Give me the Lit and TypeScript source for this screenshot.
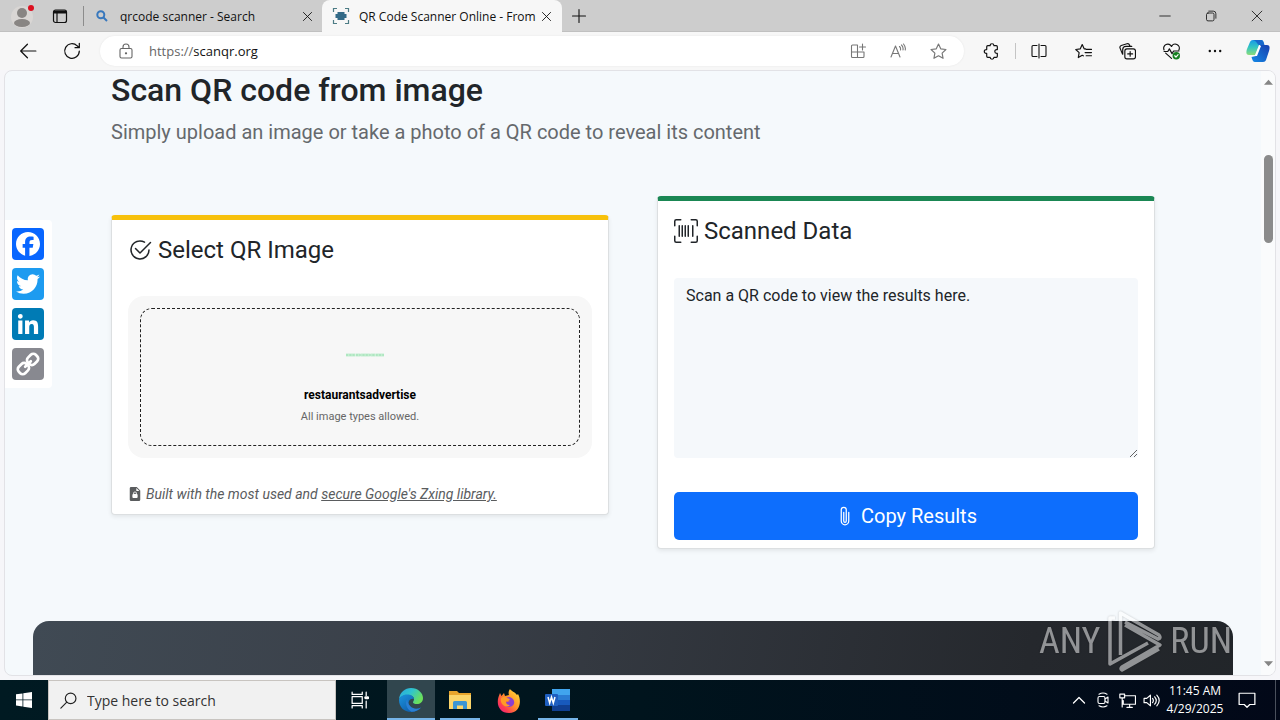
import { LitElement, html, css, svg, TemplateResult } from "lit";
import { customElement } from "lit/decorators.js";

const line = (size: number, body: TemplateResult, box = 16) => html`
  <svg class="line" width=${size} height=${size} viewBox="0 0 ${box} ${box}" aria-hidden="true">${body}</svg>`;
const solid = (size: number, body: TemplateResult, box = 16) => html`
  <svg class="solid" width=${size} height=${size} viewBox="0 0 ${box} ${box}" aria-hidden="true">${body}</svg>`;

const closeIcon = (s: number) => line(s, svg`<path d="M3 3l10 10M13 3L3 13"/>`);

const shared = css`
  * { box-sizing: border-box; }
  button {
    display: inline-flex; align-items: center; justify-content: center;
    border: 0; padding: 0; margin: 0; background: none; color: inherit; font: inherit;
  }
  svg { display: block; flex: none; }
  .line { fill: none; stroke: currentColor; stroke-width: 1.1; stroke-linecap: round; stroke-linejoin: round; }
  .solid { fill: currentColor; }
`;

@customElement("browser-chrome")
export class BrowserChrome extends LitElement {
  static styles = [shared, css`
    :host { display: block; font-family: "Open Sans", "Noto Sans", sans-serif; font-size: 12px; color: #111; }
    .titlebar { display: flex; height: 32px; background: #cdcdcd; align-items: stretch; box-shadow: inset 0 -1px #c0c0c0; }
    .profile { width: 44px; }
    .workspace { width: 32px; }
    .divider { width: 1px; height: 20px; margin: 6px 8px 6px 7px; background: #8c8c8c; }
    .tab { display: flex; align-items: center; }
    .idle { width: 230px; padding: 0 8px 0 4px; gap: 12px; }
    .active { width: 240px; padding: 0 9px 0 10px; gap: 9px; background: #f7f7f7; border-radius: 8px 8px 0 0; }
    .name { flex: 1; min-width: 0; justify-content: flex-start; white-space: nowrap; }
    .new { width: 34px; }
    .window { display: flex; margin-left: auto; }
    .window button { width: 46px; }
    .toolbar { display: flex; height: 38px; background: #f7f7f7; align-items: center; padding: 0 2px 0 6px; }
    .tool { width: 44px; height: 30px; }
    .copilot { width: 41px; height: 30px; }
    .address {
      flex: 1; min-width: 0; height: 30px; margin: 0 5px 0 6px; padding: 0 6px 0 18px; display: flex; align-items: center;
      background: #fff; border-radius: 15px; box-shadow: 0 0 2px #e4e4e4; color: #666; font-size: 13px;
    }
    .address label { margin-left: 15px; }
    .address input { flex: 1; min-width: 0; border: 0; outline: 0; padding: 0; background: none; color: #111; font: inherit; }
    .address button { width: 40px; height: 30px; color: #777; }
    .sep { width: 1px; height: 16px; margin: 0 1px 0 2px; background: #c4c4c4; }
  `];

  render() {
    return html`
      <header class="titlebar">
        <button class="profile" aria-label="Profile">
          <svg width="24" height="26" viewBox="0 0 24 26">
            <circle cx="12" cy="14" r="11" fill="#d9d6d4"/>
            <circle cx="12" cy="10" r="5" fill="#888583"/>
            <ellipse cx="12" cy="20" rx="8" ry="4" fill="#888583"/>
            <circle cx="21" cy="5" r="3" fill="#dc1020"/>
          </svg>
        </button>
        <button class="workspace" aria-label="Tab actions">
          <svg width="16" height="16" viewBox="0 0 16 16" fill="none" stroke="#111" stroke-width="1.2">
            <rect x="1.5" y="2" width="13" height="12.5" rx="2"/><path d="M2 4h12" stroke-width="3"/><path d="M5 4v10"/>
          </svg>
        </button>
        <span class="divider"></span>
        <div class="tab idle">
          <svg width="12" height="12" viewBox="0 0 12 12" fill="none" stroke="#3878bd" stroke-width="2">
            <circle cx="4.800" cy="4.800" r="3.500"/><path d="M7.500 7.500L11 11"/>
          </svg>
          <button class="name">qrcode scanner - Search</button>
          <button aria-label="Close tab">${closeIcon(13)}</button>
        </div>
        <div class="tab active">
          <svg width="18" height="18" viewBox="0 0 18 18">
            <path d="M1.500 5V1.500H5M13 1.500h3.500V5M16.500 13v3.500H13M5 16.500H1.500V13" fill="none" stroke="#4d7c85" stroke-width="1.200"/>
            <path d="M5.500 5h7v2h2v4h-2v2h-7v-2h-2V7h2z" fill="#336a87"/>
          </svg>
          <button class="name">QR Code Scanner Online - From</button>
          <button aria-label="Close tab">${closeIcon(13)}</button>
        </div>
        <button class="new" aria-label="New tab">${line(16, svg`<path d="M8 1.500v13M1.500 8h13"/>`)}</button>
        <div class="window">
          <button aria-label="Minimize">${line(12, svg`<path d="M1 8h14"/>`)}</button>
          <button aria-label="Restore">${line(12, svg`<rect x="2" y="4" width="10" height="10.500" rx="2"/><path d="M5 1.500h6a3.500 3.500 0 0 1 3.500 3.500v6"/>`)}</button>
          <button aria-label="Close">${line(12, svg`<path d="M1.500 1.500l13 13M14.500 1.500l-13 13"/>`)}</button>
        </div>
      </header>
      <nav class="toolbar">
        <button class="tool" aria-label="Back">${line(18, svg`<path d="M15 8H1.500M7.500 2L1.500 8l6 6"/>`)}</button>
        <button class="tool" aria-label="Refresh">${line(18, svg`<path d="M14.500 8A6.500 6.500 0 1 1 12.600 3.400L14.300 5M14.500 1.200V5h-3.800"/>`)}</button>
        <div class="address">
          ${line(16, svg`<rect x="2" y="5.500" width="12" height="9.500" rx="1.500"/><path d="M5 5.500V4a3 3 0 0 1 6 0v1.500"/><circle cx="8" cy="10.300" r=".6" fill="currentColor"/>`)}
          <label for="url">https://</label><input id="url" value="scanqr.org">
          <button aria-label="Install app">${line(16, svg`<path d="M7 2H2.500A1 1 0 0 0 1.500 3v10.500a1 1 0 0 0 1 1H13a1 1 0 0 0 1-1V9H1.500M7.500 2v12.500M12.500 1v6M9.500 4h6"/>`)}</button>
          <button aria-label="Read aloud">${line(16, svg`<path d="M1 14L5.500 3 10 14M2.500 10.500h6M9.500 3.500q1.500 1.500 1 3.500M11.500 2q2 2 1.500 5M13.500 1q2.500 3 1.700 6"/>`)}</button>
          <button aria-label="Add favorite">${line(17, svg`<path d="M8 1l2.100 4.500 4.900.6-3.600 3.400.9 4.900L8 12l-4.300 2.400.9-4.900L1 6.100l4.900-.6z"/>`)}</button>
        </div>
        <button class="tool" aria-label="Extensions">${line(17, svg`<path d="M4.500 2.500h2.200a1.800 1.800 0 0 1 3.600 0h2.200a1 1 0 0 1 1 1v2.700h-.6a1.800 1.800 0 0 0 0 3.600h.6v2.700a1 1 0 0 1-1 1h-2.200a1.800 1.800 0 0 1-3.600 0H4.500a1 1 0 0 1-1-1V9.800H3a1.800 1.800 0 0 1 0-3.600h.5V3.500a1 1 0 0 1 1-1z"/>`)}</button>
        <span class="sep"></span>
        <button class="tool" aria-label="Split screen">${line(16, svg`<path d="M6 2.500H2a1 1 0 0 0-1 1v9a1 1 0 0 0 1 1h4M10 2.500h4a1 1 0 0 1 1 1v9a1 1 0 0 1-1 1h-4M8 1v14"/>`)}</button>
        <button class="tool" aria-label="Favorites">${line(17, svg`<path d="M10 5.500H8.600L6.800 1.500 5 5.500l-4.300.6 3.200 3-.8 4.600 3.700-2.200 1 .6M10.500 6h5M9.500 9h6M10.500 12h5"/>`)}</button>
        <button class="tool" aria-label="Collections">${line(17, svg`<rect x="5.500" y="5.500" width="10" height="9.500" rx="2"/><path d="M10.500 8v4.500M8.200 10.300h4.600M3.300 10.500L1 4.800A2 2 0 0 1 2.100 2.300L7.500.7a2 2 0 0 1 2.400 1.300l.5 1M3.500 10.500V6A3 3 0 0 1 6.500 3.200H12"/>`)}</button>
        <button class="tool" aria-label="Browser essentials">${line(17, svg`<path d="M1 6.500A3.700 3.700 0 0 1 8 3.300a3.700 3.700 0 0 1 7 3.200M2.500 9.500L8 14.500M1 8h3.500L6 5.500 8.500 10 10 7.500h5"/><circle cx="12.500" cy="12" r="3.500" fill="#168021" stroke="none"/><path d="M11 12l1.200 1.200 2-2.200" stroke="#fff"/>`)}</button>
        <button class="tool" aria-label="Settings and more">${solid(16, svg`<circle cx="2.800" cy="8" r="1.200"/><circle cx="8" cy="8" r="1.200"/><circle cx="13.200" cy="8" r="1.200"/>`)}</button>
        <button class="copilot" aria-label="Copilot">
          <svg width="24" height="24" viewBox="0 0 24 24">
            <defs>
              <linearGradient id="ca" x1="0" y1="0" x2="0" y2="1"><stop offset="0" stop-color="#1599e8"/><stop offset=".5" stop-color="#35c6c0"/><stop offset="1" stop-color="#8bdc7a"/></linearGradient>
              <linearGradient id="cb" x1="0" y1="1" x2="1" y2="0"><stop offset="0" stop-color="#1489e6"/><stop offset="1" stop-color="#173fae"/></linearGradient>
            </defs>
            <path d="M7 1h8c2 0 2.500 1.500 3 4l-5 1-4 10H3c-3 0-3-3-2-6L4 3c.5-1.300 1.500-2 3-2z" fill="url(#ca)"/>
            <path d="M7 1h8c2 0 2.500 1.500 3.500 5H13c-1.500 0-2-4-6-5z" fill="#1768cc"/>
            <path d="M17 23H9c-2 0-2.500-1.500-3.500-5L10 17l4.500-11H21c3 0 3 3 2 6l-3 9c-.5 1.300-1.500 2-3 2z" fill="url(#cb)"/>
            <path d="M13 7h2l-4 10H9z" fill="#fff"/>
          </svg>
        </button>
      </nav>`;
  }
}

@customElement("scan-page")
export class ScanPage extends LitElement {
  static styles = [shared, css`
    :host {
      display: flex; position: relative; min-height: 0; overflow: hidden; margin: 0 4px 4px;
      border: 1px solid #e2e2e6; border-radius: 8px; background: #f5f9fc; color: #212529;
      font-family: Roboto, "Liberation Sans", sans-serif; font-size: 16px; line-height: 24px;
    }
    .view { flex: 1; min-width: 0; overflow: hidden; }
    .content { max-width: 1044px; margin: 0 auto; }
    h1 { margin: 0 0 8px; font-size: 32px; line-height: 38px; font-weight: 500; }
    .lead { margin: 0 0 49px; font-size: 20px; line-height: 30px; color: #65696d; }
    .cards { display: grid; grid-template-columns: 1fr 1fr; gap: 48px; align-items: start; }
    .card {
      display: flex; flex-direction: column; padding: 16px 16px 8px; background: #fff;
      border: 1px solid #dcdfe1; border-top: 5px solid; border-radius: 4px; box-shadow: 0 2px 4px #00000013;
    }
    .select { margin-top: 19px; border-top-color: #f7c10c; }
    .result { border-top-color: #1a8754; }
    h2 { display: flex; align-items: center; gap: 6px; margin: 0 0 32px; font-size: 24px; line-height: 28px; font-weight: 400; }
    .result h2 { margin-bottom: 33px; }
    .drop { position: relative; display: block; padding: 12px; background: #f7f7f7; border-radius: 16px; }
    .drop input { position: absolute; inset: 0; width: 100%; height: 100%; opacity: 0; }
    .zone {
      display: flex; flex-direction: column; align-items: center; height: 138px; padding-top: 44px;
      border: 1px dashed #222; border-radius: 12px;
    }
    .file { margin-top: 28px; font-size: 12px; line-height: 20px; font-weight: 700; color: #000; }
    .types { font-size: 11px; line-height: 24px; color: #666; }
    .note { display: flex; align-items: center; gap: 4px; margin: 25px 0 1px; font-size: 14px; line-height: 22px; color: #5a5c5e; }
    .note a { color: inherit; }
    textarea {
      display: block; width: 100%; height: 180px; margin: 0 0 34px; padding: 6px 12px; border: 0; border-radius: 4px;
      background: #f5f8fb; color: #212529; font: inherit; resize: vertical;
    }
    .copy { height: 48px; gap: 6px; border-radius: 5px; background: #0d6efd; color: #fff; font-size: 20px; }
    .banner { max-width: 1200px; height: 300px; margin: 72px auto 0; border-radius: 16px; background: linear-gradient(100deg, #404a54, #3a4049 30%, #25282d 80%, #212529); }
    .share {
      position: absolute; left: 0; top: 149px; display: flex; flex-direction: column; gap: 8px;
      padding: 8px 8px 8px 7px; background: #fff; border-radius: 0 4px 4px 0;
    }
    .share a { display: block; border-radius: 4px; color: #fff; }
    .fb { background: #0866ff; } .tw { background: #1d9bf0; } .li { background: #007bb5; } .ln { background: #888990; }
    .scroll { display: flex; flex-direction: column; align-items: center; width: 14px; padding: 7px 0; background: #fafbfc; color: #858585; }
    .thumb { width: 9px; height: 88px; margin-top: 68px; border-radius: 5px; background: #8b8b8b; }
    .down { margin-top: auto; }
  `];

  render() {
    return html`
      <main class="view">
        <div class="content">
          <h1>Scan QR code from image</h1>
          <p class="lead">Simply upload an image or take a photo of a QR code to reveal its content</p>
          <div class="cards">
            <section class="card select">
              <h2>${solid(24, svg`<path d="M2.500 8a5.500 5.500 0 0 1 8.250-4.764.5.5 0 0 0 .5-.866A6.500 6.500 0 1 0 14.500 8a.5.5 0 0 0-1 0 5.500 5.500 0 1 1-11 0z"/><path d="M15.354 3.354a.5.5 0 0 0-.708-.708L8 9.293 5.354 6.646a.5.5 0 1 0-.708.708l3 3a.5.5 0 0 0 .708 0z"/>`)}Select QR Image</h2>
              <label class="drop">
                <input type="file" accept="image/*">
                <span class="zone">
                  <svg width="50" height="4" viewBox="0 0 50 4">
                    <path d="M11 2h38" stroke="#c4eed1" stroke-width="3" stroke-dasharray="9 .5 5 .4"/>
                    <path d="M11 2h38" stroke="#98dfb0" stroke-width="1" stroke-dasharray="2 1.300"/>
                  </svg>
                  <span class="file">restaurantsadvertise</span>
                  <span class="types">All image types allowed.</span>
                </span>
              </label>
              <p class="note">${solid(14, svg`<path fill-rule="evenodd" d="M3.500 0H10l4 4v10.500a1.500 1.500 0 0 1-1.500 1.500h-9A1.500 1.500 0 0 1 2 14.500v-13A1.500 1.500 0 0 1 3.500 0zM9.500 1v3.500H13zM6 7v1c-.6.1-1 .5-1 1v2.500c0 .6.500 1 1 1h4c.6 0 1-.4 1-1V9c0-.5-.4-.9-1-1V7a2 2 0 0 0-4 0zm1 1V7a1 1 0 0 1 2 0v1z"/>`)}
                <em>Built with the most used and <a href="#zxing">secure Google's Zxing library.</a></em></p>
            </section>
            <section class="card result">
              <h2>${solid(24, svg`<path d="M1.500 1a.5.5 0 0 0-.5.5v3a.5.5 0 0 1-1 0v-3A1.500 1.500 0 0 1 1.500 0h3a.5.5 0 0 1 0 1zM11 .5a.5.5 0 0 1 .5-.5h3A1.500 1.500 0 0 1 16 1.500v3a.5.5 0 0 1-1 0v-3a.5.5 0 0 0-.5-.5h-3a.5.5 0 0 1-.5-.5M.5 11a.5.5 0 0 1 .5.5v3a.5.5 0 0 0 .5.5h3a.5.5 0 0 1 0 1h-3A1.500 1.500 0 0 1 0 14.500v-3a.5.5 0 0 1 .5-.5m15 0a.5.5 0 0 1 .5.5v3a1.500 1.500 0 0 1-1.500 1.500h-3a.5.5 0 0 1 0-1h3a.5.5 0 0 0 .5-.5v-3a.5.5 0 0 1 .5-.5M3 4.500a.5.5 0 0 1 1 0v7a.5.5 0 0 1-1 0zm2 0a.5.5 0 0 1 1 0v7a.5.5 0 0 1-1 0zm2 0a.5.5 0 0 1 1 0v7a.5.5 0 0 1-1 0zm2 0a.5.5 0 0 1 1 0v7a.5.5 0 0 1-1 0zm3 0a.5.5 0 0 1 1 0v7a.5.5 0 0 1-1 0z"/>`)}<label for="data">Scanned Data</label></h2>
              <textarea id="data">Scan a QR code to view the results here.</textarea>
              <button class="copy">${solid(20, svg`<path d="M4.500 3a2.500 2.500 0 0 1 5 0v9a1.500 1.500 0 0 1-3 0V5a.5.5 0 0 1 1 0v7a.5.5 0 0 0 1 0V3a1.500 1.500 0 1 0-3 0v9a2.500 2.500 0 0 0 5 0V5a.5.5 0 0 1 1 0v7a3.500 3.500 0 1 1-7 0z"/>`)}Copy Results</button>
            </section>
          </div>
        </div>
        <div class="banner"></div>
      </main>
      <div class="scroll">
        ${solid(9, svg`<path d="M0 12h16L8 3z"/>`)}
        <span class="thumb"></span>
        <span class="down">${solid(9, svg`<path d="M0 4h16l-8 9z"/>`)}</span>
      </div>
      <aside class="share">
        <a class="fb" href="#facebook" aria-label="Facebook">${solid(32, svg`<path d="M28 16c0-6.627-5.373-12-12-12S4 9.373 4 16c0 5.628 3.875 10.350 9.101 11.647v-7.980h-2.474V16H13.100v-1.580c0-4.085 1.849-5.978 5.859-5.978.760 0 2.072.149 2.608.298v3.325c-.283-.03-.775-.045-1.386-.045-1.967 0-2.728.745-2.728 2.683V16h3.920l-.673 3.667h-3.247v8.245C23.395 27.195 28 22.135 28 16"/>`, 32)}</a>
        <a class="tw" href="#twitter" aria-label="Twitter">${solid(32, svg`<path d="M28 8.557a10 10 0 0 1-2.828.775 4.930 4.930 0 0 0 2.166-2.725 9.700 9.700 0 0 1-3.130 1.194 4.920 4.920 0 0 0-3.593-1.550 4.924 4.924 0 0 0-4.794 6.049c-4.090-.210-7.720-2.170-10.150-5.150a4.940 4.940 0 0 0-.665 2.477c0 1.710.870 3.214 2.190 4.100a5 5 0 0 1-2.230-.616v.060c0 2.390 1.700 4.380 3.952 4.830-.414.115-.850.174-1.297.174q-.476-.001-.928-.086a4.935 4.935 0 0 0 4.600 3.420 9.900 9.900 0 0 1-6.114 2.107q-.597 0-1.175-.068a13.950 13.950 0 0 0 7.548 2.212c9.057 0 14.010-7.502 14.010-14.008 0-.213-.005-.426-.015-.637.960-.695 1.795-1.560 2.455-2.550z"/>`, 32)}</a>
        <a class="li" href="#linkedin" aria-label="LinkedIn">${solid(32, svg`<path d="M6.227 12.610h4.190v13.480h-4.190zm2.095-6.700a2.430 2.430 0 0 1 0 4.860c-1.344 0-2.428-1.090-2.428-2.430s1.084-2.430 2.428-2.430m4.720 6.700h4.020v1.840h.058c.560-1.058 1.927-2.176 3.965-2.176 4.238 0 5.020 2.792 5.020 6.420v7.395h-4.183v-6.560c0-1.564-.030-3.574-2.178-3.574-2.180 0-2.514 1.700-2.514 3.460v6.668h-4.187z"/>`, 32)}</a>
        <a class="ln" href="#copy" aria-label="Copy link">
          <svg width="32" height="32" viewBox="0 0 32 32" fill="none" stroke="#fff" stroke-width="2.700">
            <g transform="rotate(-45 16 16)"><rect x="4" y="11.500" width="11" height="9" rx="3.500"/><rect x="17" y="11.500" width="11" height="9" rx="3.500"/><path d="M12 16h8" stroke-linecap="round"/></g>
          </svg>
        </a>
      </aside>`;
  }
}

@customElement("task-bar")
export class TaskBar extends LitElement {
  static styles = [shared, css`
    :host {
      display: flex; height: 40px; color: #fff; background: linear-gradient(90deg, #001a22, #00141d 50%, #020818);
      font-family: "Open Sans", "Noto Sans", sans-serif; font-size: 12px;
    }
    .start { width: 48px; }
    .search { display: flex; align-items: center; gap: 10px; width: 288px; padding: 0 12px 0 11px; background: #f1f1f1; border: 1px solid #c8c4c0; color: #222; }
    .search input { flex: 1; min-width: 0; padding: 0; border: 0; outline: 0; background: none; color: #222; font: inherit; font-size: 14px; }
    .search input::placeholder { color: #333; opacity: 1; }
    .app { width: 49px; border: solid transparent; border-width: 2px 0 0; }
    .view { width: 51px; padding-right: 3px; }
    .current { width: 48px; background: #31464e; border-bottom: 2px solid #76b4e8; }
    .open { width: 40px; margin: 0 4px 0 5px; border-bottom: 2px solid #76b4e8; }
    .tray { display: flex; margin-left: auto; }
    .tray button { width: 24px; }
    .tray .clock { width: 64px; flex-direction: column; line-height: 18px; }
    .tray .notes { width: 40px; }
    .edge { width: 5px; margin-left: 8px; border-left: 1px solid #4a505c; }
  `];

  render() {
    return html`
      <button class="start" aria-label="Start">${solid(16, svg`<path d="M0 2.300L6.500 1.400v6.100H0zM7.300 1.300L16 0v7.500H7.300zM0 8.300h6.500v6.200L0 13.600zM7.300 8.300H16V16l-8.700-1.300z"/>`)}</button>
      <div class="search">
        <label for="find" aria-label="Search">${line(17, svg`<circle cx="10" cy="6" r="5"/><path d="M6.400 9.600L.8 15.200"/>`)}</label>
        <input id="find" placeholder="Type here to search">
      </div>
      <button class="view" aria-label="Task view">${line(18, svg`<path d="M1 1v2h9V1M1 15v-2h9v2M1 5h9v6H1zM13.500 1v3M13.500 9v6"/><path d="M13 6h2" stroke-width="2.500"/>`)}</button>
      <button class="app current" aria-label="Edge">
        <svg width="26" height="26" viewBox="0 0 26 26">
          <defs>
            <linearGradient id="e1" x1="0" y1="0" x2="1" y2=".5"><stop offset="0" stop-color="#2aa5de"/><stop offset=".5" stop-color="#2fc4cf"/><stop offset="1" stop-color="#6be05a"/></linearGradient>
            <linearGradient id="e2" x1="0" y1="0" x2="1" y2="1"><stop offset="0" stop-color="#1b93dd"/><stop offset="1" stop-color="#0c4f9e"/></linearGradient>
          </defs>
          <path d="M1 12C2 5 7 1 13 1c7 0 12 5 12 10 0 4-3 6-6 6-2.500 0-4-.8-4-1.800 0-.7 1-1.200 1-3.200 0-2-2.500-4-6-4-4 0-7 1.500-9 4z" fill="url(#e1)"/>
          <path d="M1 13c0-3 4-5.500 8-5.500 4 0 7 2 7 4.500-5-1.500-8 5-2 9 3 2 7 .5 9-.5C20 24 16 25 13 25 6 25 1 20 1 13z" fill="url(#e2)"/>
          <path d="M9.500 12c-3 4-1 10 4 12.800C17 25 21 23 23 20.500c-3 1.500-6 1.500-8.500.3-3-1.500-5.500-5-5-8.800z" fill="#2a7fd4"/>
        </svg>
      </button>
      <button class="app open" aria-label="File Explorer">
        <svg width="22" height="20" viewBox="0 0 22 20">
          <path d="M0 1h8l2 2h12v16H0z" fill="#e8a52c"/><path d="M0 5h22v14H0z" fill="#fbd56a"/>
          <path d="M4 19v-6.500q0-1.500 1.500-1.500h11q1.500 0 1.500 1.500V19h-4v-3.500H8V19z" fill="#3b95d3"/>
        </svg>
      </button>
      <button class="app" aria-label="Firefox">
        <svg width="24" height="24" viewBox="0 0 24 24">
          <defs><linearGradient id="ff" x1="1" y1="0" x2="0" y2="1"><stop offset="0" stop-color="#ffe63e"/><stop offset=".45" stop-color="#ff9428"/><stop offset=".75" stop-color="#ff3b52"/><stop offset="1" stop-color="#e41a91"/></linearGradient></defs>
          <path d="M13 0c1 2 5 3 7 6l1-1c4 7 2 19-9 19C3 24-1 16 1.500 8L3 4l1.500 3L7 4l1 3 4-1c-1-2 0-5 1-6z" fill="url(#ff)"/>
          <path d="M8 10q4-4 8 0c3 4 0 8-4 8-5 0-6-4-5-7l3 2 3-1z" fill="#8a3fd1"/>
          <path d="M4 9q4-3 6 0l3 1q-1 2-4 2.500Q9 16 13 16q-3 3-7 0-3-3-2-7z" fill="#ff9a27"/>
        </svg>
      </button>
      <button class="app open" aria-label="Word">
        <svg width="26" height="22" viewBox="0 0 26 22">
          <rect x="7" width="18" height="22" rx="1" fill="#185abd"/><path d="M7 0h18v6H7z" fill="#41a5ee"/><path d="M7 6h18v5H7z" fill="#2b7cd3"/><path d="M7 16h18v6H7z" fill="#103f91"/>
          <rect y="5" width="13" height="12" rx="1" fill="#1f5fc0"/><path d="M3 8l1.700 6L6.500 8l1.800 6L10 8" fill="none" stroke="#fff" stroke-width="1.500"/>
        </svg>
      </button>
      <div class="tray">
        <button aria-label="Hidden icons">${line(16, svg`<path d="M2.500 11L8 5.500l5.500 5.500" stroke-width="1.300"/>`)}</button>
        <button aria-label="Meet now">${line(16, svg`<rect x="3" y="4.500" width="7" height="7" rx="1.500"/><path d="M10 7l3-2v6l-3-2M4 2.200q4-2.400 8 0M4 13.800q4 2.400 8 0"/>`)}</button>
        <button aria-label="Network">${line(17, svg`<path d="M5 3.500h10.500v8H4V8M7.500 14.500h5M10 11.500v3M.8 2h4.500v3.500H.8zM3 5.500V14"/>`)}</button>
        <button aria-label="Volume">${line(17, svg`<path d="M1 6h2.500L7 3v10l-3.500-3H1zM9 6q1.500 2 0 4M11 4.500q3 3.500 0 7M13 3q4.500 5 0 10"/>`)}</button>
        <button class="clock"><span>11:45 AM</span><span>4/29/2025</span></button>
        <button class="notes" aria-label="Notifications">${line(18, svg`<path d="M1 2h14v10h-4.500L8 14.500 5.500 12H1z"/>`)}</button>
        <span class="edge"></span>
      </div>`;
  }
}

@customElement("app-root")
export class AppRoot extends LitElement {
  static styles = [shared, css`
    :host { display: grid; position: relative; grid-template-rows: auto minmax(0, 1fr) auto; height: 100vh; overflow: hidden; background: #f6f6f9; }
    .mark {
      position: absolute; right: 48px; bottom: 48px; display: flex; align-items: center; gap: 7px; height: 62px; opacity: .5;
      color: #fff; font-family: "Roboto Condensed", "Liberation Sans Narrow", "Liberation Sans", sans-serif; font-size: 36px; line-height: 62px;
      pointer-events: none; filter: drop-shadow(0 0 1px #0006);
    }
  `];

  render() {
    return html`
      <browser-chrome></browser-chrome>
      <scan-page></scan-page>
      <task-bar></task-bar>
      <div class="mark">
        <span>ANY</span>
        <svg width="56" height="62" viewBox="0 0 56 62" fill="none" stroke="#fff" stroke-width="3.500" stroke-linejoin="round">
          <path d="M13.500 45V3L52 25q2.500 3-1 4L18 12M8 8H3v46l38-21M18 15l35 20-38 22q-2 2 0 3l37-21"/>
        </svg>
        <span>RUN</span>
      </div>`;
  }
}
